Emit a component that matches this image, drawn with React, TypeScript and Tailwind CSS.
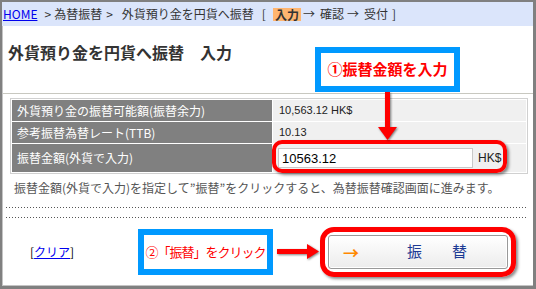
import React from "react";

const rows = [
  { label: "外貨預り金の振替可能額(振替余力)", value: "10,563.12 HK$" },
  { label: "参考振替為替レート(TTB)", value: "10.13" },
];

const DownArrow = () => (
  <svg width="22" height="50" viewBox="0 0 22 50" className="drop-shadow-[1px_1px_1px_rgba(0,0,0,0.5)]">
    <rect x="8" y="0" width="5" height="36" fill="#ff0000" />
    <polygon points="1,35 20,35 10.5,48" fill="#ff0000" />
  </svg>
);

const RightArrow = () => (
  <svg width="45" height="16" viewBox="0 0 45 16" className="drop-shadow-[1px_1px_1px_rgba(0,0,0,0.5)]">
    <rect x="2" y="5" width="32" height="5" fill="#ff0000" />
    <polygon points="32,0 32,15 44,7.5" fill="#ff0000" />
  </svg>
);

const App = () => {
  return (
    <div className="box-border flex h-[289px] w-[536px] flex-col overflow-hidden border-t-2 border-r-[3px] border-b-[3px] border-l-2 border-[#808080] bg-white font-['Noto_Sans_CJK_JP',sans-serif] text-[#333]">
      {/* breadcrumb */}
      <div className="flex h-[24px] shrink-0 items-center bg-[#dbe5fb] pl-[1px] text-[12px] leading-[14px]">
        <a className="text-[#0000ee] underline">HOME</a>
        <span className="ml-[7px]">&gt;</span>
        <span className="ml-[3px]">為替振替</span>
        <span className="ml-[4px]">&gt;</span>
        <span className="ml-[9px]">外貨預り金を円貨へ振替</span>
        <span className="ml-[8px]">[</span>
        <span className="ml-[7px] bg-[#ffb570] px-[2px] font-bold leading-[13px]">入力</span>
        <span className="ml-[2px]">→</span>
        <span className="ml-[5px]">確認</span>
        <span className="ml-[3px]">→</span>
        <span className="ml-[5px]">受付</span>
        <span className="ml-[4px]">]</span>
      </div>

      <div className="relative flex flex-1 flex-col border-b border-l border-[#c4c4c4]">
        {/* title */}
        <div className="h-[67px] shrink-0 pl-[5px] pt-[16px]">
          <h1 className="text-[16px] leading-[20px] font-bold text-[#333]">外貨預り金を円貨へ振替　入力</h1>
        </div>
        <div className="h-px shrink-0 bg-[#c8c8c0]" />

        {/* table */}
        <div className="mt-[4px] mr-[5px] ml-[7px] grid grid-cols-[260px_1fr] gap-px border border-[#d0d0d0] bg-white p-px text-[12px]">
          {rows.map((r) => (
            <React.Fragment key={r.label}>
              <div className="flex h-[21px] items-center bg-[#808080] pl-[5px] text-white">{r.label}</div>
              <div className="flex h-[21px] items-center bg-[#f0f0f0] pl-[6px] font-['Liberation_Sans',sans-serif] text-[11px] text-[#222]">
                {r.value}
              </div>
            </React.Fragment>
          ))}
          <div className="flex h-[28px] items-center bg-[#808080] pl-[5px] text-white">振替金額(外貨で入力)</div>
          <div className="relative flex h-[28px] items-center bg-[#f0f0f0] pl-[5px]">
            <input
              readOnly
              value="10563.12"
              className="h-[20px] w-[195px] border border-[#c8c8c8] bg-white pl-[3px] font-['Liberation_Sans',sans-serif] text-[13px] text-black outline-none"
            />
            <span className="ml-[5px] font-['Liberation_Sans',sans-serif] text-[12px] text-[#222]">HK$</span>
            <div className="pointer-events-none absolute top-[-4px] left-[-1px] h-[33px] w-[235px] rounded-[10px] border-4 border-[#ff0000] shadow-[2px_2px_3px_rgba(0,0,0,0.45)]" />
          </div>
        </div>

        <p className="mt-[6px] pl-[11px] text-[12px] leading-[16px] text-[#555]">
          振替金額(外貨で入力)を指定して”振替”をクリックすると、為替振替確認画面に進みます。
        </p>

        <div className="mt-[11px] mr-[5px] ml-[3px] h-px bg-[repeating-linear-gradient(to_right,#555_0_1px,transparent_1px_3px)]" />
        <div className="mt-[9px] mr-[5px] ml-[3px] h-px bg-[repeating-linear-gradient(to_right,#555_0_1px,transparent_1px_3px)]" />

        {/* actions */}
        <div className="flex flex-1 items-center pl-[27px]">
          <span className="w-[108px] shrink-0 text-[12px] text-black">
            [<a className="text-[#0000ee] underline">クリア</a>]
          </span>
          <div className="flex h-[46px] w-[135px] shrink-0 items-center justify-center border-[6px] border-[#0099ff] bg-white text-[13px] tracking-[-1px] text-[#ff0000]">
            ②「振替」をクリック
          </div>
          <div className="ml-[2px] shrink-0">
            <RightArrow />
          </div>
          <div className="flex h-[50px] w-[196px] shrink-0 items-center rounded-[14px] border-[5px] border-[#ff0000] px-[3px] shadow-[2px_2px_3px_rgba(0,0,0,0.45)]">
            <button className="flex h-[34px] w-[180px] items-center rounded-[3px] border border-[#999] bg-[linear-gradient(#ffffff,#ececec)] pl-[14px] shadow-[inset_0_0_0_1px_#fff]">
              <span className="text-[16px] font-bold text-[#ff8800]">→</span>
              <span className="ml-[48px] text-[15px] text-[#1c3a94]">振</span>
              <span className="ml-[30px] text-[15px] text-[#1c3a94]">替</span>
            </button>
          </div>
        </div>

        {/* callout 1 */}
        <div className="absolute top-[21px] left-[312px] flex h-[45px] w-[145px] items-center justify-center border-[6px] border-[#0099ff] bg-white text-[15px] font-bold text-[#ff0000]">
          ①振替金額を入力
        </div>
        <div className="absolute top-[66px] left-[374px]">
          <DownArrow />
        </div>
      </div>
    </div>
  );
};

export default App;
